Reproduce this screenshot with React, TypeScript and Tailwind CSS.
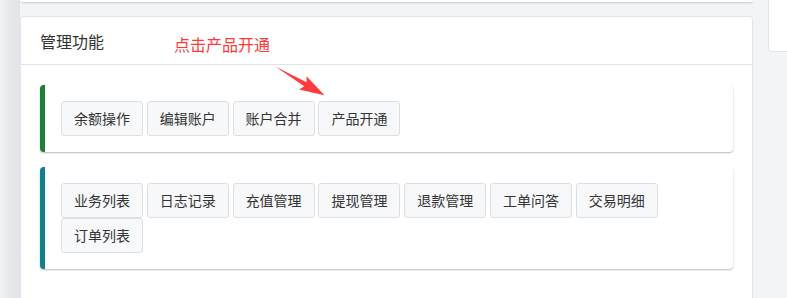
import React from "react";

const groups = [
  {
    color: "border-l-[#1f7f38]",
    items: ["余额操作", "编辑账户", "账户合并", "产品开通"],
  },
  {
    color: "border-l-[#127f8a]",
    items: ["业务列表", "日志记录", "充值管理", "提现管理", "退款管理", "工单问答", "交易明细", "订单列表"],
  },
];

export default function App() {
  return (
    <div
      className="relative flex h-[298px] w-[787px] overflow-hidden bg-[#f3f4f7] text-[#333]"
      style={{ fontFamily: '"Noto Sans CJK SC", "Noto Sans", sans-serif' }}
    >
      {/* sidebar shadow */}
      <div className="h-full w-[20px] shrink-0 bg-gradient-to-r from-[#f1f2f5] via-[#e7e8ec] to-[#e3e4e8]" />

      <div className="flex w-[733px] shrink-0 flex-col">
        {/* bottom of previous card */}
        <div className="h-[2px] rounded-b-[4px] bg-white shadow-[0_1px_2px_rgba(0,0,0,0.18)]" />

        {/* management card */}
        <div className="relative mt-[14px] flex-1 rounded-t-[4px] border border-b-0 border-[#e4e5e9] bg-white">
          <div className="flex h-[48px] items-center border-b border-[#e2e3e6] px-[19px] pt-[1px] text-[16px]">
            管理功能
          </div>

          <span className="absolute left-[153px] top-[16px] text-[16px] leading-[22px] text-[#ff3a3a]">
            点击产品开通
          </span>
          <svg className="absolute left-[233px] top-[38px]" width="80" height="50" viewBox="253 54 80 50">
            <polygon
              transform="rotate(29.7 274 66)"
              points="274,65.5 309,63.7 306,58.4 331,66 306,73.6 309,68.3"
              fill="#ff3b3b"
            />
          </svg>

          <div className="flex flex-col gap-[15px] px-[19px] pt-[20px]">
            {groups.map((g, i) => (
              <div
                key={i}
                className={`rounded-[4px] border-l-[5px] ${g.color} bg-white py-[16px] pl-[16px] pr-[16px] shadow-[0_1px_2px_rgba(0,0,0,0.28)]`}
              >
                <div className="flex flex-wrap gap-x-[3.8px]">
                  {g.items.map((t) => (
                    <button
                      key={t}
                      className="rounded-[3px] border border-[#dcdfe4] bg-[#f7f8fa] px-[12px] py-[6px] text-[14px] leading-[21px] text-[#333]"
                    >
                      {t}
                    </button>
                  ))}
                </div>
              </div>
            ))}
          </div>
        </div>
      </div>

      {/* right column card */}
      <div className="ml-[15px] h-[52px] flex-1 rounded-bl-[4px] border-b border-l border-[#e4e5e9] bg-white" />
    </div>
  );
}
